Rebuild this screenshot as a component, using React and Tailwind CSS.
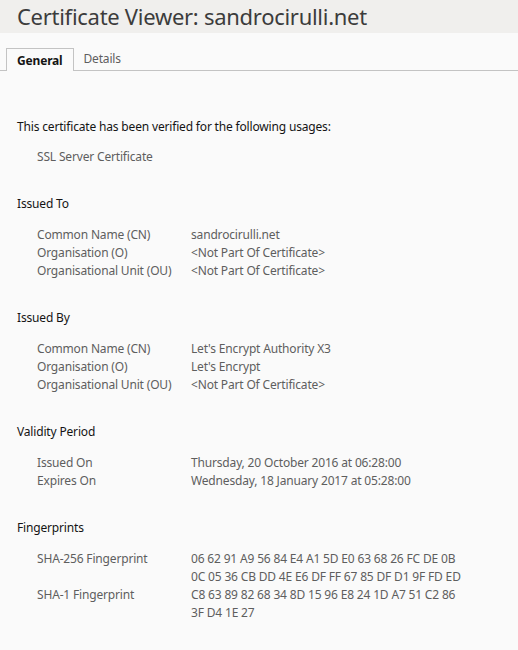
const sections = [
  {
    title: "Issued To",
    rows: [
      ["Common Name (CN)", ["sandrocirulli.net"]],
      ["Organisation (O)", ["<Not Part Of Certificate>"]],
      ["Organisational Unit (OU)", ["<Not Part Of Certificate>"]],
    ],
  },
  {
    title: "Issued By",
    rows: [
      ["Common Name (CN)", ["Let's Encrypt Authority X3"]],
      ["Organisation (O)", ["Let's Encrypt"]],
      ["Organisational Unit (OU)", ["<Not Part Of Certificate>"]],
    ],
  },
  {
    title: "Validity Period",
    rows: [
      ["Issued On", ["Thursday, 20 October 2016 at 06:28:00"]],
      ["Expires On", ["Wednesday, 18 January 2017 at 05:28:00"]],
    ],
  },
  {
    title: "Fingerprints",
    rows: [
      [
        "SHA-256 Fingerprint",
        [
          "06 62 91 A9 56 84 E4 A1 5D E0 63 68 26 FC DE 0B",
          "0C 05 36 CB DD 4E E6 DF FF 67 85 DF D1 9F FD ED",
        ],
      ],
      ["SHA-1 Fingerprint", ["C8 63 89 82 68 34 8D 15 96 E8 24 1D A7 51 C2 86", "3F D4 1E 27"]],
    ],
  },
];

function Section({ title, rows }) {
  return (
    <div className="mt-[29px]">
      <h2 className="text-[12px] leading-[18px] text-[#141414]">{title}</h2>
      <div className="mt-[13px] pl-[20px] grid grid-cols-[154px_1fr] text-[12px] leading-[18px] text-[#5e5e5e]">
        {rows.map(([label, values]) => (
          <div key={label} className="contents">
            <div>{label}</div>
            <div>
              {values.map((v) => (
                <div key={v}>{v}</div>
              ))}
            </div>
          </div>
        ))}
      </div>
    </div>
  );
}

export default function App() {
  return (
    <div
      className="w-[518px] h-[650px] bg-[#fafafa] overflow-hidden tracking-[-0.17px]"
      style={{ fontFamily: '"Noto Sans", "DejaVu Sans", sans-serif' }}
    >
      {/* TITLE BAR */}
      <div className="h-[33px] bg-[#f0efed] pl-[17px]">
        <h1 className="text-[22px] leading-[33px] tracking-[-0.28px] text-[#3c3c3c] whitespace-nowrap">
          Certificate Viewer: sandrocirulli.net
        </h1>
      </div>

      {/* TABS */}
      <div className="mt-[15px] flex items-end border-b border-[#c3c3c3] pl-[6px] h-[23px]">
        <div className="h-[23px] -mb-px pt-[2px] px-[10px] border border-b-0 border-[#c3c3c3] bg-[#fafafa] text-[12px] leading-[20px] font-bold text-[#141414]">
          General
        </div>
        <div className="h-[23px] pt-[2px] px-[10px] text-[12px] leading-[20px] text-[#5e5e5e]">
          Details
        </div>
      </div>

      {/* BODY */}
      <div className="pl-[17px] pt-[47px]">
        <p className="text-[12px] leading-[18px] text-[#141414]">
          This certificate has been verified for the following usages:
        </p>
        <p className="mt-[12px] pl-[20px] text-[12px] leading-[18px] text-[#5e5e5e]">
          SSL Server Certificate
        </p>

        {sections.map((s) => (
          <Section key={s.title} {...s} />
        ))}
      </div>
    </div>
  );
}
